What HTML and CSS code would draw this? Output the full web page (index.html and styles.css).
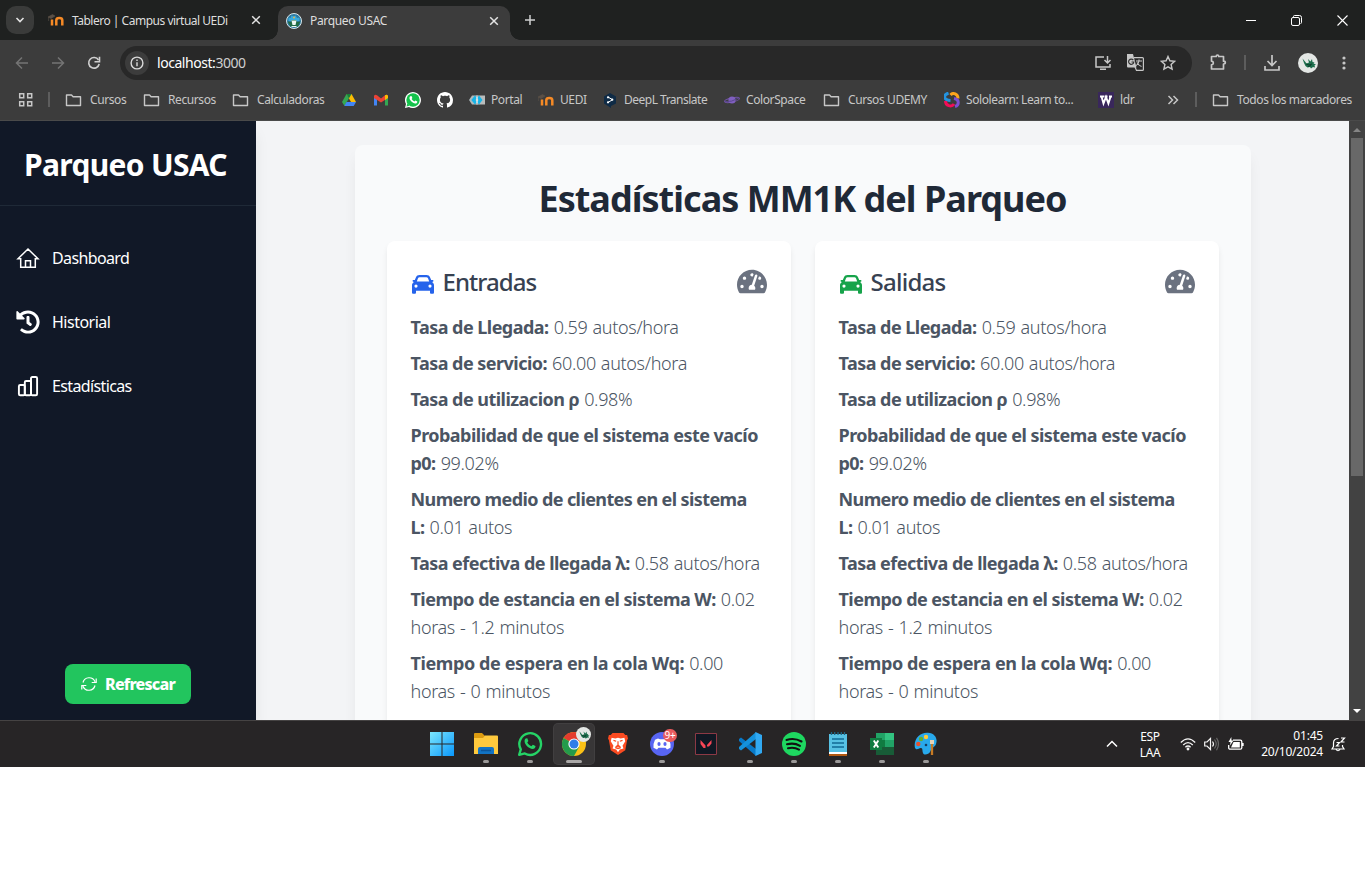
FILE: index.html
```html
<!DOCTYPE html>
<html lang="es">
<head>
<meta charset="utf-8">
<title>Parqueo USAC</title>
<link rel="stylesheet" href="styles.css">
</head>
<body>
<svg class="defs" aria-hidden="true">
  <symbol id="folder" viewBox="0 0 16 16"><path d="M1 3h5l1.600 1.700H15v8.800H1z" fill="none" stroke="#c7c7c7" stroke-width="1.400" stroke-linejoin="round"/></symbol>
  <symbol id="moodle" viewBox="0 0 16 16"><path d="M4 13.500V7.500M8.300 13.500V8.200c0-2.800 6-2.800 6 0v5.300" fill="none" stroke="#f68a26" stroke-width="2.500"/><path d="M0 5l4.500-2.500L7 4 3 6.500zM.6 5v4" fill="#5b5047" stroke="#5b5047" stroke-width=".6"/></symbol>
  <symbol id="close" viewBox="0 0 10 10"><path d="M1.200 1.200l7.600 7.600M8.800 1.200L1.200 8.800" stroke="#e3e3e3" stroke-width="1.500"/></symbol>
  <symbol id="dragon" viewBox="0 0 20 20"><circle cx="10" cy="10" r="10" fill="#e4e7e5"/><path d="M4.500 5.500l2.500 3 1.500 2L11 9.500 10 6l2.500 2.500L14 6l.5 3 2 .5-1 1 2.500 1-1.500.8.5 2.200-2-.5-2 1.500-1-1.500-2.500.5L7.500 13 6 10z" fill="#1c6e4c"/><path d="M8 11l3 1 3-1M10 13.500l3-1" stroke="#0d3d2b" fill="none"/></symbol>
  <symbol id="car" viewBox="0 0 22 20"><path fill-rule="evenodd" d="M7.500 1h7c1.700 0 2.900.8 3.500 2.200L19.200 6H20.700c1 0 1 1.600 0 1.800l-.6.200c1.200.8 1.900 1.900 1.900 3.400v7.100c0 .8-.5 1.300-1.300 1.300h-1.400c-.8 0-1.300-.5-1.300-1.300V16.800H4v1.700c0 .8-.5 1.300-1.300 1.300H1.300C.5 19.800 0 19.300 0 18.500v-7.100C0 9.900.7 8.800 1.900 8l-.6-.2c-1-.2-1-1.800 0-1.800h1.500L4 3.200C4.600 1.800 5.800 1 7.500 1zm0 2.300c-.7 0-1.200.4-1.500 1L4.800 7.500h12.400L16 4.300c-.3-.6-.8-1-1.500-1zM4 10.500a1.600 1.600 0 1 0 0 3.200 1.600 1.600 0 0 0 0-3.200zm14 0a1.600 1.600 0 1 0 0 3.200 1.600 1.600 0 0 0 0-3.200z"/></symbol>
  <symbol id="gauge" viewBox="0 0 576 512"><path d="M288 32C128.940 32 0 160.940 0 320c0 52.800 14.250 102.260 39.060 144.800 5.610 9.620 16.300 15.200 27.440 15.200h443c11.140 0 21.830-5.580 27.440-15.200C561.750 422.260 576 372.800 576 320c0-159.060-128.940-288-288-288zm0 64c14.710 0 26.580 10.130 30.320 23.650-1.110 2.260-2.640 4.230-3.450 6.670l-9.220 27.670c-5.130 3.490-10.970 6.010-17.640 6.010-17.670 0-32-14.330-32-32S270.330 96 288 96zM96 384c-17.670 0-32-14.330-32-32s14.330-32 32-32 32 14.330 32 32-14.330 32-32 32zm48-160c-17.670 0-32-14.330-32-32s14.330-32 32-32 32 14.330 32 32-14.330 32-32 32zm246.770-72.410l-61.330 184C343.130 347.330 352 364.540 352 384c0 11.720-3.380 22.550-8.880 32H232.880c-5.500-9.450-8.880-20.280-8.880-32 0-33.940 26.500-61.430 59.900-63.590l61.340-184.010c4.170-12.560 17.730-19.450 30.360-15.170 12.570 4.190 19.350 17.790 15.170 30.360zm14.660 57.200l15.520-46.550c3.470-1.290 7.130-2.230 11.050-2.230 17.670 0 32 14.330 32 32s-14.330 32-32 32c-11.380-.01-20.890-6.280-26.570-15.220zM480 384c-17.670 0-32-14.330-32-32s14.330-32 32-32 32 14.330 32 32-14.330 32-32 32z"/></symbol>
  <symbol id="whatsapp" viewBox="0 0 24 24"><path d="M2 22l1.500-5A10 10 0 1 1 7.200 20.700z" fill="none" stroke="currentColor" stroke-width="2.200" stroke-linejoin="round"/><path d="M8 7l1.500-.2 1 2.500-1 1.300c1 1.700 2 2.600 3.800 3.500l1.300-1.400 2.500 1.200c0 1.800-1.200 2.600-2.600 2.600C10.700 16.500 7 12.500 7 9.500 7 8.300 7.400 7.500 8 7z" fill="currentColor"/></symbol>
</svg>

<header class="tabstrip">
  <div class="tab-search"><svg width="10" height="10" viewBox="0 0 10 10"><path d="M1.500 3L5 6.500 8.500 3" fill="none" stroke="#e3e3e3" stroke-width="1.600"/></svg></div>
  <div class="tab idle">
    <svg width="16" height="16"><use href="#moodle"/></svg>
    <span class="tab-title t-campus">Tablero | Campus virtual UEDi</span>
    <svg width="10" height="10"><use href="#close"/></svg>
  </div>
  <div class="tab active">
    <svg width="16" height="16" viewBox="0 0 16 16"><circle cx="8" cy="8" r="7.500" fill="#2c78a0" stroke="#d9e6e8"/><path d="M2.500 4.500l2 .5 1-2.500 2 1 2-1 1.500 2.500 2.500-.5v3.500h-11z" fill="#38a9dc"/><path d="M1.500 8.500l3.500.5 1-2h4l1 2 3.500-.5-2.500 5H4.500z" fill="#216b45"/><path d="M5.500 7.500h5L9.500 12h-3z" fill="#eef7f2"/><path d="M5.500 13.500h5" stroke="#eef7f2"/><circle cx="8" cy="4.500" r="1" fill="#e7b54b"/></svg>
    <span class="tab-title t-parqueo">Parqueo USAC</span>
    <svg width="10" height="10"><use href="#close"/></svg>
  </div>
  <svg class="new-tab" width="12" height="12" viewBox="0 0 12 12"><path d="M6 1v10M1 6h10" stroke="#d0d0d0" stroke-width="1.500"/></svg>
  <div class="window-buttons">
    <svg width="10" height="10" viewBox="0 0 10 10"><path d="M0 5.500h10" stroke="#fff"/></svg>
    <svg width="11" height="11" viewBox="0 0 11 11"><rect x=".5" y="2.500" width="8" height="8" rx="1.500" fill="none" stroke="#fff"/><path d="M2.500 2V1.500q0-1 1-1H8.500q2 0 2 2v5q0 1-1 1" fill="none" stroke="#fff"/></svg>
    <svg width="11" height="11" viewBox="0 0 11 11"><path d="M.5.500l10 10M10.500.500l-10 10" stroke="#fff" stroke-width="1.100"/></svg>
  </div>
</header>

<div class="toolbar">
  <svg width="14" height="14" viewBox="0 0 14 14"><path d="M13 7H2M7 1.500L1.500 7 7 12.500" fill="none" stroke="#747474" stroke-width="1.500"/></svg>
  <svg width="14" height="14" viewBox="0 0 14 14"><path d="M1 7h11M7 1.500L12.500 7 7 12.500" fill="none" stroke="#747474" stroke-width="1.500"/></svg>
  <svg width="14" height="14" viewBox="0 0 14 14"><path d="M11.500 4A5.300 5.300 0 1 0 12.200 8" fill="none" stroke="#d0d0d0" stroke-width="1.600"/><path d="M12.500.800v5h-5" fill="none" stroke="#d0d0d0" stroke-width="1.600"/></svg>
  <div class="omnibox">
    <span class="info"><svg width="14" height="14" viewBox="0 0 14 14"><circle cx="7" cy="7" r="5.900" fill="none" stroke="#dadada" stroke-width="1.400"/><path d="M7 6.200v4M7 3.600V5" stroke="#dadada" stroke-width="1.400"/></svg></span>
    <span class="url">localhost:<i>3000</i></span>
    <div class="omni-icons">
      <svg width="16" height="14" viewBox="0 0 16 14"><path d="M9 1H1v10h14V8M5 13.200h6" fill="none" stroke="#c7c7c7" stroke-width="1.500"/><path d="M12.500 0v7M9.500 4l3 3 3-3" fill="none" stroke="#c7c7c7" stroke-width="1.500"/></svg>
      <svg width="17" height="17" viewBox="0 0 17 17"><path d="M0 0h6l3.500 13.500H1Q0 13.500 0 12.500z" fill="#c7c7c7"/><path d="M7 3.600h8.400q1 0 1 1v10.800q0 1-1 1H9.500L8 13" fill="none" stroke="#c7c7c7" stroke-width="1.200"/><path d="M6.300 6.200A2.600 2.600 0 1 0 6.800 8H4.500" fill="none" stroke="#333" stroke-width="1.200"/><path d="M9 7h6M12 5.500V7c-.3 2-2 4-3 4.500M10 8.500c1 2 3 3.500 4.500 4" fill="none" stroke="#c7c7c7" stroke-width="1.100"/></svg>
      <svg width="16" height="16" viewBox="0 0 16 16"><path d="M8 1.500l1.900 4.300 4.700.500-3.500 3.200 1 4.700L8 11.800l-4.100 2.400 1-4.700L1.400 6.300l4.700-.5z" fill="none" stroke="#c7c7c7" stroke-width="1.400"/></svg>
    </div>
  </div>
  <div class="tools">
    <svg width="17" height="17" viewBox="0 0 17 17"><path d="M1.500 2.500h4.700c0-2 2.500-2 2.500 0h4.800v4.700c2.400 0 2.400 2.800 0 2.800v5h-12v-4.200c2.500-.3 2.500-3.300 0-3.600z" fill="none" stroke="#c7c7c7" stroke-width="1.700" stroke-linejoin="round"/></svg>
    <span class="divider"></span>
    <svg width="16" height="16" viewBox="0 0 16 16"><path d="M8 0v10M3.500 6L8 10.500 12.500 6M1 11v4h14v-4" fill="none" stroke="#c7c7c7" stroke-width="1.700"/></svg>
    <svg class="avatar" width="20" height="20"><use href="#dragon"/></svg>
    <svg width="4" height="14" viewBox="0 0 4 14" fill="#c7c7c7"><circle cx="2" cy="2" r="1.600"/><circle cx="2" cy="7" r="1.600"/><circle cx="2" cy="12" r="1.600"/></svg>
  </div>
</div>

<nav class="bookmarks">
  <span><svg width="16" height="16" viewBox="0 0 16 16"><path d="M1.700 1.700h4v4h-4zM9.700 1.700h4v4h-4zM1.700 9.700h4v4h-4zM9.700 9.700h4v4h-4z" fill="none" stroke="#c7c7c7" stroke-width="1.500"/></svg></span>
  <span class="divider"></span>
  <span class="folder"><svg width="17" height="16"><use href="#folder"/></svg>Cursos</span>
  <span class="folder"><svg width="17" height="16"><use href="#folder"/></svg>Recursos</span>
  <span class="folder"><svg width="17" height="16"><use href="#folder"/></svg>Calculadoras</span>
  <span><svg width="16" height="16" viewBox="0 0 16 16"><path d="M5.500 2h5L15 10h-5z" fill="#fbbc04"/><path d="M5.500 2L8 6.200 3.500 14 1 10z" fill="#34a853"/><path d="M5.500 10H15l-2.300 4H3.300z" fill="#4285f4"/><path d="M5.500 2h5L8 6.200z" fill="#188038"/></svg></span>
  <span><svg width="16" height="16" viewBox="0 0 16 16"><path d="M1 3.500l3 2v8H1z" fill="#4285f4"/><path d="M15 3.500l-3 2v8h3z" fill="#34a853"/><path d="M1 4q1-2 3-.7L8 6.500l4-3.200Q14 2 15 4v2L8 10.500 1 6z" fill="#ea4335"/><path d="M12 3.300Q14 2 15 4v2l-3 2z" fill="#fbbc04"/></svg></span>
  <span><svg width="16" height="16" viewBox="0 0 16 16"><path d="M0 16l1-4A8 8 0 1 1 4 15z" fill="#fff"/><circle cx="8" cy="8" r="6.700" fill="#14c24b"/><path d="M1.500 14.500l.7-3 2.300 2.300z" fill="#14c24b"/><path d="M5.300 4.200l1.200-.1.900 1.900-.8 1C7.400 8.300 8.300 9 9.500 9.500l.9-1 1.900.9c0 1.500-1 2.100-2 2C7.400 11 4.200 8 4.500 5.500q.2-.8.800-1.300z" fill="#fff"/></svg></span>
  <span><svg width="16" height="16" viewBox="0 0 16 16"><path fill="#fff" d="M8 0C3.580 0 0 3.580 0 8c0 3.540 2.290 6.530 5.470 7.590.4.070.55-.17.55-.38 0-.19-.01-.82-.01-1.490-2.010.37-2.530-.49-2.690-.94-.09-.23-.48-.94-.82-1.130-.28-.15-.68-.52-.01-.53.63-.01 1.080.58 1.230.82.720 1.210 1.870.87 2.330.66.070-.52.280-.87.510-1.070-1.780-.2-3.640-.89-3.640-3.950 0-.87.310-1.590.82-2.150-.08-.2-.36-1.020.08-2.120 0 0 .67-.21 2.200.82.640-.18 1.320-.27 2-.27s1.360.09 2 .27c1.530-1.040 2.200-.82 2.200-.82.440 1.100.160 1.920.080 2.120.51.560.82 1.270.82 2.150 0 3.070-1.870 3.750-3.650 3.950.290.250.540.730.540 1.480 0 1.070-.01 1.930-.01 2.200 0 .21.150.46.550.38A8.010 8.010 0 0 0 16 8c0-4.420-3.580-8-8-8z"/></svg></span>
  <span class="t-portal"><svg width="16" height="16" viewBox="0 0 16 16"><path d="M3 3.500h6v9H3L0 8z" fill="#aeb9bd"/><path d="M7 3.500h9v9H7z" fill="#b9bcbc"/><path d="M6 3.500L2.300 8 6 12.500 7.800 10 6.500 8l1.300-2zM10 3.500L13.500 8 10 12.500 8.200 10 9.500 8 8.200 6z" fill="#16b4e7"/><path d="M8 5v6" stroke="#fff"/></svg>Portal</span>
  <span class="t-uedi"><svg width="16" height="16"><use href="#moodle"/></svg>UEDI</span>
  <span class="t-deepl"><svg width="16" height="16" viewBox="0 0 16 16"><path d="M8 1l6 3.500v7L9 14v2l-3-2-4-2.500v-7z" fill="#0f2b46"/><path d="M6 5l4.500 2.700L6 10.500" stroke="#fff" fill="none"/><circle cx="6" cy="5.300" r="1.100" fill="#fff"/><circle cx="10.300" cy="7.700" r="1.100" fill="#fff"/><circle cx="6" cy="10.300" r="1.100" fill="#fff"/></svg>DeepL Translate</span>
  <span><svg width="16" height="16" viewBox="0 0 16 16"><ellipse cx="8" cy="8" rx="7.600" ry="2" transform="rotate(-12 8 8)" fill="none" stroke="#7054a5" stroke-width="1"/><circle cx="8" cy="8" r="3.600" fill="#805fc0"/><path d="M1 9.500q6 1 14-3.500" stroke="#5b4790" fill="none"/></svg>ColorSpace</span>
  <span class="folder"><svg width="17" height="16"><use href="#folder"/></svg>Cursos UDEMY</span>
  <span><svg width="16" height="16" viewBox="0 0 16 16" fill="none" stroke-width="3"><path d="M6.500 8.500C-1 8-1 3 4.500 1" stroke="#2493df"/><path d="M6.500 3C9 0 14 2 14 6.500" stroke="#fda51c"/><path d="M10 6.500c6 1 5 7 1 8" stroke="#7b50d2"/><path d="M1.500 9c0 5 6 6.500 8.500 3" stroke="#f30d58"/></svg>Sololearn: Learn to...</span>
  <span><svg width="16" height="16" viewBox="0 0 16 16"><path fill="#39275b" d="M0 0h16v16H0z"/><path d="M2 4.500h4M6.500 4.500h3M11 4.500h3M3.500 4.500l2 7L8 5l2.400 6.500 2.200-7" stroke="#fff" stroke-width="1.900" fill="none"/></svg>ldr</span>
  <span><svg width="12" height="10" viewBox="0 0 12 10"><path d="M1.500 1l4 4-4 4M6.500 1l4 4-4 4" fill="none" stroke="#c7c7c7" stroke-width="1.500"/></svg></span>
  <span class="divider"></span>
  <span class="folder"><svg width="17" height="16"><use href="#folder"/></svg>Todos los marcadores</span>
</nav>

<div class="viewport">
  <aside class="sidebar">
    <h1>Parqueo USAC</h1>
    <ul class="menu">
      <li><svg width="24" height="24" viewBox="0 0 24 24"><path d="M2 12.800L12 3l10 9.800h-2.700V21.300H4.700v-8.500zM9.500 21v-6.300h5V21" fill="none" stroke="#fff" stroke-width="1.500"/></svg><span class="m-dash">Dashboard</span></li>
      <li><svg width="24" height="24" viewBox="0 0 512 512"><path fill="#fff" d="M504 255.531c.253 136.640-111.180 248.372-247.820 248.468-59.015.042-113.223-20.530-155.822-54.911-11.077-8.940-11.905-25.541-1.839-35.607l11.267-11.267c8.609-8.609 22.353-9.551 31.891-1.984C173.062 425.135 212.781 440 256 440c101.705 0 184-82.311 184-184 0-101.705-82.311-184-184-184-48.814 0-93.149 18.969-126.068 49.932l50.754 50.754c10.080 10.080 2.941 27.314-11.313 27.314H24c-8.837 0-16-7.163-16-16V38.627c0-14.254 17.234-21.393 27.314-11.314l49.372 49.372C129.209 34.136 189.552 8 256 8c136.810 0 247.747 110.780 248 247.531zm-180.912 78.784l9.823-12.630c8.138-10.463 6.253-25.542-4.210-33.679L288 256.349V152c0-13.255-10.745-24-24-24h-16c-13.255 0-24 10.745-24 24v135.651l65.409 50.874c10.463 8.137 25.541 6.253 33.679-4.210z"/></svg><span class="m-hist">Historial</span></li>
      <li><svg width="24" height="24" viewBox="0 0 24 24" fill="none" stroke="#fff" stroke-width="1.900"><rect x="2.900" y="11" width="5.900" height="10.300" rx="1.300"/><rect x="8.800" y="7" width="6.200" height="14.300" rx="1.300"/><rect x="15" y="3" width="6.100" height="18.300" rx="1.300"/></svg><span class="m-est">Estadísticas</span></li>
    </ul>
    <button class="refresh"><svg width="16" height="16" viewBox="0 0 16 16"><path d="M2 6.500A6.300 6.300 0 0 1 14 5.800M14 9.500A6.300 6.300 0 0 1 2 10.200M15.200 2.500v4h-4.500M.8 13.500v-4h4.500" fill="none" stroke="#fff" stroke-width="1.200"/></svg><span>Refrescar</span></button>
  </aside>
  <main class="page">
    <section class="panel">
      <h2>Estadísticas MM1K del Parqueo</h2>
      <div class="cards">
        <article class="card">
          <div class="card-head"><svg class="car blue"><use href="#car"/></svg><h3 class="h-ent">Entradas</h3><svg class="gauge"><use href="#gauge"/></svg></div>
          <p><b>Tasa de Llegada:</b> 0.59 autos/hora</p>
          <p><b>Tasa de servicio:</b> 60.00 autos/hora</p>
          <p><b>Tasa de utilizacion ρ</b> 0.98%</p>
          <p><b>Probabilidad de que el sistema este vacío<br>p0:</b> 99.02%</p>
          <p><b class="tight">Numero medio de clientes en el sistema<br>L:</b> 0.01 autos</p>
          <p><b>Tasa efectiva de llegada λ:</b> 0.58 autos/hora</p>
          <p><b>Tiempo de estancia en el sistema W:</b> 0.02<br>horas - 1.2 minutos</p>
          <p><b class="loose">Tiempo de espera en la cola Wq:</b> 0.00<br>horas - 0 minutos</p>
        </article>
        <article class="card">
          <div class="card-head"><svg class="car green"><use href="#car"/></svg><h3 class="h-sal">Salidas</h3><svg class="gauge"><use href="#gauge"/></svg></div>
          <p><b>Tasa de Llegada:</b> 0.59 autos/hora</p>
          <p><b>Tasa de servicio:</b> 60.00 autos/hora</p>
          <p><b>Tasa de utilizacion ρ</b> 0.98%</p>
          <p><b>Probabilidad de que el sistema este vacío<br>p0:</b> 99.02%</p>
          <p><b class="tight">Numero medio de clientes en el sistema<br>L:</b> 0.01 autos</p>
          <p><b>Tasa efectiva de llegada λ:</b> 0.58 autos/hora</p>
          <p><b>Tiempo de estancia en el sistema W:</b> 0.02<br>horas - 1.2 minutos</p>
          <p><b class="loose">Tiempo de espera en la cola Wq:</b> 0.00<br>horas - 0 minutos</p>
        </article>
      </div>
    </section>
  </main>
  <div class="scrollbar">
    <svg width="8" height="4" viewBox="0 0 8 4"><path d="M0 4l4-4 4 4z" fill="#858585"/></svg>
    <div class="thumb"></div>
    <svg class="down" width="8" height="4" viewBox="0 0 8 4"><path d="M0 0l4 4 4-4z" fill="#fff"/></svg>
  </div>
</div>

<footer class="taskbar">
  <div class="apps">
    <span><svg width="24" height="24" viewBox="0 0 24 24"><defs><linearGradient id="win" x1="0" y1="0" x2="1" y2="1"><stop stop-color="#7ce7fd"/><stop offset="1" stop-color="#0997fb"/></linearGradient></defs><path d="M0 0h11.500v11.500H0zM12.500 0H24v11.500H12.500zM0 12.500h11.500V24H0zM12.500 12.500H24V24H12.500z" fill="url(#win)"/></svg></span>
    <span class="open"><svg width="24" height="24" viewBox="0 0 24 24"><path d="M0 2q0-1 1-1h7l3 3v4H0z" fill="#dc9b10"/><path d="M0 6h9l2-2.500h12q1 0 1 1V22H0z" fill="#fec93d"/><path d="M4 22v-5q0-2 2-2h12q2 0 2 2v5z" fill="#1273c4"/><path d="M7 18.500h10" stroke="#0b559b" stroke-width="1.500"/></svg></span>
    <span class="open wa"><svg width="26" height="26"><use href="#whatsapp"/></svg></span>
    <span class="open current"><svg width="30" height="28" viewBox="0 0 30 28"><circle cx="15" cy="14" r="12" fill="#fbc116"/><path d="M15 14L4.600 8A12 12 0 0 1 25.400 8z" fill="#e33b2e"/><path d="M15 14L4.600 8A12 12 0 0 0 15 26l5-9z" fill="#249b4b"/><circle cx="15" cy="14" r="5.600" fill="#fff"/><circle cx="15" cy="14" r="4.500" fill="#2e7de9"/></svg><svg class="profile" width="15" height="15"><use href="#dragon"/></svg></span>
    <span><svg width="20" height="24" viewBox="0 0 22 26"><path d="M5 1h12l2 2h2l1 4-1 2-2 11-8 5-8-5L1 9 0 7l1-4h2z" fill="#fb4b21"/><path d="M4 6l4 1 3-1 3 1 4-1 1 4-3 5 1 3-4 1-2 3-2-3-4-1 1-3-3-5z" fill="#fff"/><path d="M6 9l3 1M16 9l-3 1M11 10v4l-2 2h4l-2-2M8 17l3 1 3-1" stroke="#fb4b21" stroke-width="1.300" fill="none"/></svg></span>
    <span class="open discord"><svg width="24" height="24" viewBox="0 0 24 24"><circle cx="12" cy="12" r="12" fill="#5865f2"/><path d="M8 6.500l2 .7h4l2-.7 3 1.200q2 4 1.500 8L17 17.500l-1.500-1.800h-7L7 17.500l-3.500-1.800q-.5-4 1.500-8z" fill="#fff"/><ellipse cx="9" cy="12" rx="1.600" ry="1.900" fill="#5865f2"/><ellipse cx="15" cy="12" rx="1.600" ry="1.900" fill="#5865f2"/></svg><i class="badge">9+</i></span>
    <span><svg width="22" height="22" viewBox="0 0 22 22"><path d="M.5.500h21v21H.5z" fill="#101823" stroke="#8c3945"/><path d="M5.500 7l5 5.500v2.500H8.500L5.500 11zM16.500 7l-4.500 5v1.500h2l2.500-3z" fill="#f84656"/></svg></span>
    <span class="open"><svg width="24" height="24" viewBox="0 0 24 24"><path d="M1 7l2-1.500L18 17v7L1 9z" fill="#0879c8"/><path d="M1 17l2 1.500L18 7V0L1 15z" fill="#1592dc"/><path d="M17.500 0L24 3v18l-6.500 3z" fill="#31a9f2"/></svg></span>
    <span class="open"><svg width="24" height="24" viewBox="0 0 24 24"><circle cx="12" cy="12" r="12" fill="#1ed760"/><path d="M4.500 8q8-2.500 15 1.500M5 12.300q7-2 13 1.500M6 16.300q6-1.500 11 1.300" fill="none" stroke="#111" stroke-width="2.100" stroke-linecap="round"/></svg></span>
    <span class="open"><svg width="18" height="24" viewBox="0 0 18 24"><path d="M0 2h18v20H0z" fill="#57c1e3"/><path d="M0 20h18v2H0z" fill="#fff"/><path d="M0 22h18v2H0z" fill="#b25911"/><path d="M2.500 0v3M5.700 0v3M9 0v3M12.300 0v3M15.500 0v3" stroke="#1d6686" stroke-width="1.300"/><path d="M3 7h12M3 11h12M3 15h12" stroke="#126a95" stroke-width="1.700"/></svg></span>
    <span class="open"><svg width="24" height="22" viewBox="0 0 24 22"><path d="M6 0h18v22H6z" fill="#185c37"/><path d="M6 0h9v7H6z" fill="#21a366"/><path d="M15 0h9v7h-9z" fill="#33c481"/><path d="M15 7h9v7h-9z" fill="#21a366"/><path d="M6 7h9v7H6z" fill="#107c41"/><path d="M0 5h12v12H0z" fill="#107c41"/><path d="M3.800 7.500l4.500 7M8.300 7.500l-4.500 7" stroke="#fff" stroke-width="1.900"/></svg></span>
    <span class="open"><svg width="24" height="24" viewBox="0 0 24 24"><path d="M1 16C-1 7 6 0 14 .7c7 .3 10 6.300 8 11.300-1 3-3 3-4 4.500s-1 1.500-2 3.500-6 4-7 1 0-4.500-2-5-4 3-6 0z" fill="#28a9eb"/><circle cx="4.300" cy="12" r="2.200" fill="#e6502b"/><circle cx="7" cy="7" r="2.200" fill="#62ae2d"/><circle cx="12" cy="5" r="2.200" fill="#ffca35"/><circle cx="12" cy="13" r="1.300" fill="#163d61"/><path d="M18 11v12" stroke="#c77a23" stroke-width="2.300"/><path d="M16 8h4v4h-4z" fill="#e4d3b8"/></svg></span>
  </div>
  <div class="tray">
    <svg width="12" height="8" viewBox="0 0 12 8"><path d="M1 6.500l5-5 5 5" fill="none" stroke="#fff" stroke-width="1.500"/></svg>
    <div class="lang"><span>ESP</span><span>LAA</span></div>
    <svg width="16" height="13" viewBox="0 0 16 13" fill="none" stroke="#f4f4f4" stroke-width="1.300"><path d="M.8 4.500Q8-2.700 15.200 4.500M3.200 7Q8 2.200 12.800 7M5.400 9.300Q8 6.700 10.600 9.300"/><circle cx="8" cy="11" r=".8" fill="#fff"/></svg>
    <svg width="16" height="14" viewBox="0 0 16 14" fill="none" stroke="#f4f4f4" stroke-width="1.200"><path d="M.7 5h2.300L6.500 1.500v11L3 9H.7zM8.500 4.500q2 2.500 0 5"/><path d="M10.500 2.500q3.500 4.500 0 9M12.500.800q4 6 0 12.400" stroke="#666"/></svg>
    <svg width="16" height="14" viewBox="0 0 16 14"><path d="M5 3.200h7.300q1.500 0 1.500 1.500v6q0 1.500-1.500 1.500H2.200q-1.500 0-1.500-1.500V8M15 6v3" fill="none" stroke="#fff" stroke-width="1.300"/><path d="M5.500 5h6.300v5.500H3z" fill="#fff"/><path d="M3.300 0L.5 5h2L2 8.500 5.500 3.500h-2z" fill="#fff"/></svg>
    <div class="clock"><span class="time">01:45</span><span>20/10/2024</span></div>
    <svg width="15" height="15" viewBox="0 0 15 15" fill="none" stroke="#fff" stroke-width="1.200"><path d="M7.500 1.500Q2.500 1.500 2.500 6v3.500L1 12h12l-1.500-2.500V8M5 12.500q2 2.500 4 0M10 1h3.500L10 5h3.500M5.500 5.500h3L5.500 9h3"/></svg>
  </div>
</footer>
</body>
</html>
```

FILE: styles.css
```css
* { box-sizing: border-box; }
body { margin: 0; width: 1365px; height: 879px; overflow: hidden; background: #fff; font-family: "Noto Sans", "Open Sans", sans-serif; }
svg { display: block; flex: none; }
b, i { font-weight: inherit; font-style: inherit; }
h1, h2, h3, p, ul { margin: 0; padding: 0; }
.defs { position: absolute; width: 0; height: 0; }

/* Tab strip */
.tabstrip { display: flex; align-items: center; height: 40px; background: #1f2120; color: #dedede; font-size: 12px; white-space: nowrap; }
.tab-search { display: grid; place-items: center; width: 28px; height: 28px; margin-left: 6px; border-radius: 10px; background: #3a3b3a; }
.tab { display: flex; align-items: center; }
.tab.idle { width: 227px; padding-left: 14px; margin-right: 17px; }
.tab.active { position: relative; align-self: flex-end; width: 232px; height: 34px; padding: 0 11px 5px 8px; border-radius: 10px 10px 0 0; background: #3c3c3c; }
.tab.active::before, .tab.active::after { content: ""; position: absolute; bottom: 0; width: 10px; height: 10px; }
.tab.active::before { left: -10px; background: radial-gradient(circle at 0 0, #1f2120 9.500px, #3c3c3c 10px); }
.tab.active::after { right: -10px; background: radial-gradient(circle at 100% 0, #1f2120 9.500px, #3c3c3c 10px); }
.tab-title { margin-left: 8px; flex: 1; }
.t-campus { letter-spacing: -.49px; }
.t-parqueo { letter-spacing: -.33px; }
.new-tab { margin-left: 14px; }
.window-buttons { display: flex; align-items: center; gap: 35px; margin-left: auto; padding-right: 17px; }

/* Address row */
.toolbar { display: flex; align-items: center; height: 45px; padding: 0 13px 0 15px; background: #3c3c3c; gap: 22px; }
.omnibox { display: flex; align-items: center; width: 1072px; height: 34px; padding: 0 16px 0 5px; margin-left: -3px; border-radius: 17px; background: #282828; color: #fff; font-size: 14px; }
.info { display: grid; place-items: center; width: 24px; height: 24px; border-radius: 50%; background: #3c3c3c; }
.url { margin-left: 8px; letter-spacing: -.45px; }
.url i { color: #cfcfcf; }
.omni-icons { display: flex; align-items: center; gap: 16px; margin-left: auto; }
.tools { display: flex; align-items: center; gap: 17px; margin-left: -4px; flex: 1; }
.divider { width: 2px; height: 15px; background: #5d5d5d; }
.tools .divider { margin-right: 1px; }
.avatar { margin-left: 1px; }
.tools svg:last-child { margin-left: auto; margin-right: 6px; }

/* Bookmarks */
.bookmarks { display: grid; grid-template-columns: 30px 17px 78px 89px 109px 32px 32px 32px 32px 69px 64px 122px 99px 121px 154px 69px 28px 17px 145px; align-items: center; height: 36px; padding: 0 0 6px 18px; background: #3c3c3c; border-bottom: 1px solid #4a4a4a; color: #c7c7c7; font-size: 12px; letter-spacing: -.4px; white-space: nowrap; }
.bookmarks > span { display: flex; align-items: center; gap: 6px; }
.bookmarks > .folder { gap: 8px; }
.bookmarks > .t-deepl { letter-spacing: -.5px; }

/* Application */
.viewport { display: flex; height: 599px; background: #f3f4f6; overflow: hidden; }
.sidebar { position: relative; display: flex; flex-direction: column; width: 256px; background: #111827; color: #fff; box-shadow: 0 10px 15px -3px rgba(0,0,0,.1); }
.sidebar h1 { height: 85px; padding: 22px 0 0 24px; border-bottom: 1px solid #1f2937; font-size: 30px; line-height: 44px; font-weight: 700; white-space: nowrap; letter-spacing: -.67px; }
.menu { list-style: none; padding: 32px 16px; }
.menu li { display: flex; align-items: center; gap: 12px; height: 40px; margin-bottom: 24px; font-size: 16px; }
.m-dash, .m-est { letter-spacing: -.63px; }
.m-hist { letter-spacing: -.5px; }
.refresh { display: flex; align-items: center; justify-content: center; gap: 8px; width: 126px; height: 40px; margin: auto auto 16px; padding: 0; border: 0; border-radius: 8px; background: #22c55e; color: #fff; font: 800 16px "Noto Sans", sans-serif; letter-spacing: -.8px; }
.page { flex: 1; display: flex; justify-content: center; padding-top: 24px; }
.panel { width: 896px; height: 700px; padding: 32px; border-radius: 8px; background: #f9fafb; box-shadow: 0 10px 15px -3px rgba(0,0,0,.08); }
.panel h2 { height: 40px; margin-bottom: 24px; color: #1f2937; font-size: 36px; line-height: 44px; font-weight: 700; text-align: center; letter-spacing: -.98px; white-space: nowrap; }
.cards { display: grid; grid-template-columns: 404px 404px; gap: 24px; }
.card { height: 600px; padding: 24px; border-radius: 8px; background: #fff; box-shadow: 0 4px 6px -1px rgba(0,0,0,.1); color: #4b5563; font-size: 18px; line-height: 28px; }
.card-head { display: flex; align-items: center; height: 34px; margin-bottom: 14px; }
.card-head h3 { margin-left: 8px; color: #374151; font-size: 24px; line-height: 34px; font-weight: 500; }
.card-head .h-ent { letter-spacing: -.95px; }
.card-head .h-sal { letter-spacing: -.75px; }
.car { width: 22px; height: 20px; margin: 4px 1px 0; }
.blue { fill: #2563eb; }
.green { fill: #16a34a; }
.gauge { width: 30px; height: 27px; margin: 0 0 2px auto; fill: #6b7280; }
.card p { margin-bottom: 8px; white-space: nowrap; letter-spacing: -.34px; word-spacing: .7px; font-weight: 350; }
.card p b { font-weight: 700; letter-spacing: -.53px; word-spacing: 0; }
.card p .tight { letter-spacing: -.6px; }
.card p .loose { letter-spacing: -.4px; }
.scrollbar { display: flex; flex-direction: column; align-items: center; width: 16px; padding: 7px 0; background: #424242; }
.thumb { width: 12px; height: 338px; margin-top: 6px; background: #686868; }
.down { margin-top: auto; }

/* Taskbar */
.taskbar { display: flex; height: 47px; border-top: 1px solid #454343; background: #272526; color: #fff; }
.apps { display: flex; gap: 4px; margin-left: 422px; padding-top: 3px; }
.apps > span { position: relative; display: grid; place-items: center; width: 40px; height: 40px; border-radius: 4px; }
.apps > .open::after { content: ""; position: absolute; left: 17px; bottom: 1px; width: 6px; height: 3px; border-radius: 2px; background: #9b9998; }
.apps > .current { background: #383637; box-shadow: 0 0 0 1px #413f40; }
.apps > .current::after { left: 12px; width: 16px; background: #aaa8a7; }
.profile { position: absolute; left: 22px; top: 3px; }
.wa { color: #25d366; }
.badge { position: absolute; top: 5px; left: 21px; width: 14px; height: 13px; border-radius: 7px; background: #e95b5e; font-size: 10px; line-height: 13px; text-align: center; letter-spacing: -.3px; }
.tray { display: flex; align-items: center; margin-left: auto; padding-right: 19px; font-size: 12px; line-height: 16px; }
.lang, .clock { display: flex; flex-direction: column; letter-spacing: -.4px; }
.lang { width: 22px; margin: 1px 19px 0 21px; align-items: center; }
.tray > svg + svg { margin-left: 8px; }
.clock { width: 63px; margin: 0 8px 0 16px; align-items: flex-end; letter-spacing: -.2px; }
```
